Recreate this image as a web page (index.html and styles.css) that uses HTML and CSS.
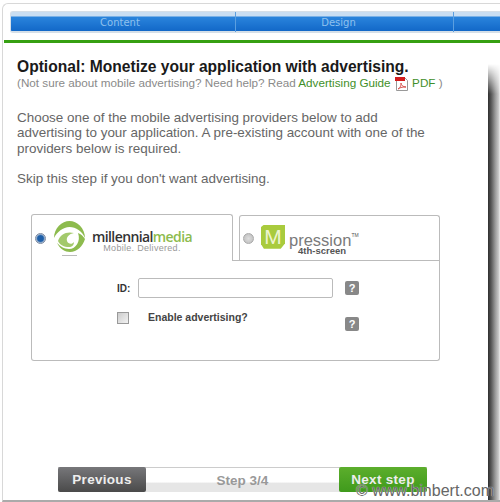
FILE: index.html
```html
<!DOCTYPE html>
<html lang="en">
<head>
  <meta charset="UTF-8" />
  <title>Monetize</title>
  <link rel="stylesheet" href="styles.css">
</head>
<body>
<div class="window">

  <!-- Wizard tabs -->
  <div class="tabs">
    <div class="tab first">Content</div>
    <div class="tab second">Design</div>
    <div class="tab last"></div>
  </div>
  <div class="green-line"></div>

  <div class="main">
    <h1>Optional: Monetize your application with advertising.</h1>
    <p class="help">(Not sure about mobile advertising? Need help? Read <a>Advertising Guide</a>
      <svg class="pdf" width="15" height="15" viewBox="0 0 15 15">
        <path d="M2.500 1.500h8l3 3v10h-11z" fill="#fff" stroke="#999"/>
        <rect x="1" y="1" width="10" height="4" fill="#d21b1b"/>
        <path d="M4 13c3-2 3-4 3-6 0 2 2 4 5 4-3 0-5 0-8 2z" fill="none" stroke="#d8534f"/>
      </svg>
      <a>PDF</a> )</p>
    <p class="intro">Choose one of the mobile advertising providers below to add advertising to your application. A pre-existing account with one of the providers below is required.</p>
    <p class="skip">Skip this step if you don't want advertising.</p>

    <!-- Providers -->
    <div class="providers">
      <div class="provider-tabs">
        <div class="provider active">
          <span class="radio on"></span>
          <svg class="eye" width="32" height="36" viewBox="0 0 32 36">
            <path d="M0 18C0 8 8 1 15.500 1S31 8 31 18C28 11 22 7 15.500 7S3 12 0 18z" fill="#8dbb4e"/>
            <path d="M4 21C6 14 13 11 20 13 15 14 12 17 13 21c1 3 5 4 7 1 0 3-2 5-5 5-5 0-9-2-11-6z" fill="#a3c96c"/>
            <path d="M24 13c3 1 5 3 7 6-2 7-8 13-15 13-5 0-10-3-13-9 3 3 7 6 12 6 7 0 12-8 9-16z" fill="#8dbb4e"/>
            <rect x="8" y="35" width="15" height="1" fill="#bbb"/>
          </svg>
          <div class="mm-logo">
            <div class="mm-name">millennial<span>media</span></div>
            <div class="mm-tag">Mobile. Delivered.</div>
          </div>
        </div>
        <div class="provider">
          <span class="radio"></span>
          <div class="m-badge">M</div>
          <div class="mp-logo">
            <div class="mp-name">pression<sup>TM</sup></div>
            <div class="mp-tag">4th-screen</div>
          </div>
        </div>
      </div>
      <div class="provider-body">
        <div class="row id-row">
          <label class="id-label">ID:</label>
          <input type="text" class="id-input" />
          <span class="q">?</span>
        </div>
        <div class="row enable-row">
          <span class="check"></span>
          <label class="enable-label">Enable advertising?</label>
          <span class="q q-low">?</span>
        </div>
      </div>
    </div>

    <!-- Footer nav -->
    <div class="nav">
      <div class="btn prev">Previous</div>
      <div class="step">Step 3/4</div>
      <div class="btn next">Next step</div>
    </div>
  </div>
</div>
<div class="edge"></div>
<div class="watermark">© www.binbert.com</div>
</body>
</html>
```

FILE: styles.css
```css
html, body {
  margin: 0;
  height: 502px;
  overflow: hidden;
  background: #fff;
}

body {
  font-family: "Liberation Sans", Arial, sans-serif;
  color: #222;
  position: relative;
}

.window {
  margin: 3px 0 0 2px;
  height: 499px;
  border-top: 1px solid #d8d8d8;
  border-left: 1px solid #d8d8d8;
  border-bottom: 2px solid #aaa;
  border-top-left-radius: 6px;
  padding-top: 7px;
  box-sizing: border-box;
}

.tabs {
  display: flex;
  margin-left: 7px;
  height: 22px;
  border: 1px solid #d5dfe8;
  border-right: none;
  border-radius: 3px 0 0 3px;
  background: linear-gradient(#c9def2 0, #c9def2 4px, #2a84dc 5px, #1268c8 19px, #d5dfe8 19px);
  box-sizing: border-box;
}

.tab {
  text-align: center;
  color: #8fc1ee;
  font-family: "DejaVu Sans", sans-serif;
  font-size: 10px;
  line-height: 21px;
  border-right: 1px solid #5b9fe0;
  box-sizing: border-box;
}

.tab.first {
  width: 225px;
  padding-right: 6px;
}

.tab.second {
  width: 218px;
  padding-right: 12px;
}

.tab.last {
  flex: 1;
  border-right: none;
}

.green-line {
  height: 3px;
  margin-top: 7px;
  margin-left: 1px;
  background: #36a012;
}

.main {
  padding: 15px 0 0 14px;
}

h1 {
  margin: 0;
  font-size: 15.6px;
  line-height: 17px;
  color: #1a1a1a;
}

.help {
  margin: 0;
  font-size: 11.7px;
  line-height: 15px;
  color: #8a8a8a;
}

.help a {
  color: #3f8f2a;
}

.pdf {
  vertical-align: -4px;
}

.intro, .skip {
  margin: 0;
  font-size: 13.45px;
  line-height: 15.3px;
  color: #666;
  width: 420px;
}

.intro {
  margin-top: 19px;
}

.skip {
  margin-top: 15px;
}

.providers {
  margin: 28px 0 0 14px;
  width: 409px;
}

.provider-tabs {
  display: flex;
  align-items: flex-end;
}

.provider {
  width: 201px;
  height: 46px;
  border: 1px solid #bbb;
  border-bottom: none;
  border-radius: 3px 3px 0 0;
  display: flex;
  align-items: center;
  box-sizing: border-box;
  margin-left: 6px;
  padding-left: 3px;
}

.provider.active {
  width: 202px;
  height: 47px;
  margin-left: 0;
}

.radio {
  width: 9px;
  height: 9px;
  border-radius: 50%;
  border: 1px solid #aaa;
  background: radial-gradient(#ddd, #bbb);
  flex: none;
}

.radio.on {
  background: radial-gradient(#1e5fa8 45%, #cfd8e4 75%);
  border-color: #7d8aa0;
}

.eye {
  margin-left: 8px;
  flex: none;
}

.mm-logo {
  margin-left: 6px;
  margin-top: 6px;
}

.mm-name {
  font-family: "Open Sans", sans-serif;
  font-size: 14px;
  line-height: 14px;
  letter-spacing: -0.6px;
  font-weight: 600;
  color: #333;
}

.mm-name span {
  color: #8dbb4e;
}

.mm-tag {
  font-size: 9px;
  line-height: 9px;
  letter-spacing: 0.3px;
  color: #999;
  text-align: center;
}

.m-badge {
  width: 24px;
  height: 24px;
  margin: -4px 0 0 7px;
  background: #a9cb3d;
  color: #eef5d0;
  font-size: 21px;
  line-height: 24px;
  text-align: center;
  clip-path: polygon(12% 0, 100% 0, 100% 78%, 82% 100%, 12% 100%, 0 82%, 0 10%);
  flex: none;
}

.mp-logo {
  margin-left: 4px;
  margin-top: 12px;
}

.mp-name {
  font-size: 16.5px;
  line-height: 12px;
  color: #7a7a7a;
}

.mp-name sup {
  font-size: 5px;
  vertical-align: 9px;
  line-height: 0;
  color: #555;
}

.mp-tag {
  font-size: 9.5px;
  line-height: 9px;
  font-weight: bold;
  color: #555;
  padding-left: 9px;
}

.provider-body {
  height: 100px;
  border: 1px solid #bbb;
  border-top: none;
  border-radius: 0 0 3px 3px;
  box-sizing: border-box;
  position: relative;
  padding-top: 17px;
}

.provider-body::before {
  content: "";
  position: absolute;
  left: 201px;
  right: 0;
  top: -1px;
  border-top: 1px solid #bbb;
}

.row {
  display: flex;
  align-items: center;
}

.id-label {
  margin-left: 85px;
  width: 21px;
  font-size: 10px;
  font-weight: bold;
  color: #333;
}

.id-input {
  width: 195px;
  height: 20px;
  box-sizing: border-box;
  border: 1px solid #bbb;
  border-radius: 2px;
  padding: 0;
  margin: 0;
}

.q {
  width: 14px;
  height: 14px;
  margin-left: 12px;
  border-radius: 2px;
  background: #888;
  color: #fff;
  font-size: 11px;
  font-weight: bold;
  line-height: 14px;
  text-align: center;
  flex: none;
}

.enable-row {
  margin-top: 14px;
  align-items: flex-start;
}

.check {
  margin-left: 85px;
  width: 12px;
  height: 12px;
  box-sizing: border-box;
  border: 1px solid #999;
  background: linear-gradient(135deg, #ccc, #f2f2f2);
  flex: none;
}

.enable-label {
  margin-left: 19px;
  width: 197px;
  font-size: 10.5px;
  font-weight: bold;
  color: #444;
  line-height: 11px;
}

.q-low {
  margin: 5px 0 0;
}

.nav {
  display: flex;
  align-items: stretch;
  height: 25px;
  width: 369px;
  margin: 106px 0 0 41px;
  background: linear-gradient(#fff 60%, #e6e6e6 61%);
  border-top: 1px solid #ccc;
  box-sizing: border-box;
}

.step {
  flex: 1;
  text-align: center;
  font-size: 13.5px;
  font-weight: bold;
  color: #999;
  line-height: 25px;
}

.btn {
  width: 88px;
  margin-top: -1px;
  height: 25px;
  border-radius: 2px;
  color: #eee;
  font-size: 13.5px;
  font-weight: bold;
  letter-spacing: 0.3px;
  text-align: center;
  line-height: 25px;
}

.prev {
  background: linear-gradient(#77777a, #4a4a4a);
}

.next {
  background: linear-gradient(#5cae2c, #3f9a1c);
}

/* shadow of the window behind, runs down the right side */
.edge {
  position: absolute;
  left: 488px;
  right: 0;
  top: 64px;
  bottom: 2px;
  background: linear-gradient(90deg, #2e2e2e, #555 25%, #999 60%, #ccc 90%, #eee);
  -webkit-mask-image: linear-gradient(transparent, #000 30px);
  mask-image: linear-gradient(transparent, #000 30px);
}

.watermark {
  position: absolute;
  right: 6px;
  top: 483px;
  font-size: 16px;
  line-height: 16px;
  color: #666;
  text-shadow: 0 0 1px #fff;
}
```
